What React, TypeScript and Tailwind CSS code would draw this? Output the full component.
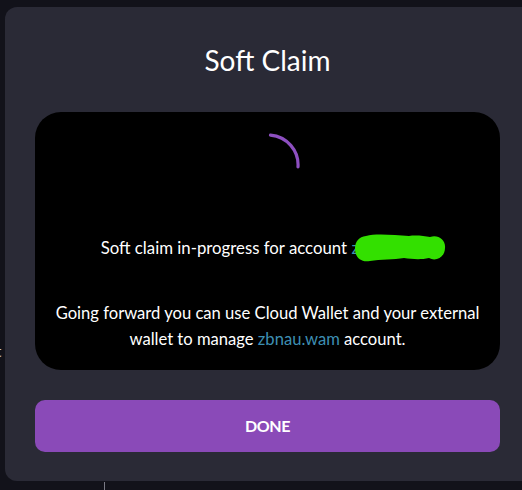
import React from "react";

function Spinner() {
  return (
    <svg width="64" height="64" viewBox="0 0 64 64" className="block">
      <path
        d="M 34.5 2.1 A 30 30 0 0 1 62 34"
        fill="none"
        stroke="#8d4fc0"
        strokeWidth="3.2"
        strokeLinecap="round"
      />
    </svg>
  );
}

function Blob() {
  return (
    <svg width="92" height="32" viewBox="0 0 92 32" className="block">
      <path
        d="M 12 4 C 22 1, 40 3, 55 4 C 62 3, 70 4, 76 5 C 84 2, 92 8, 91 16 C 91 25, 82 30, 75 26 C 66 28, 58 27, 50 26 C 40 28, 26 27, 16 29 C 6 31, 1 24, 1 17 C 1 9, 5 5, 12 4 Z"
        fill="#33e000"
      />
    </svg>
  );
}

export default function App() {
  return (
    <div
      className="relative flex w-[522px] h-[490px] items-start overflow-hidden bg-[#12121a]"
      style={{ fontFamily: "Lato, 'Noto Sans', sans-serif" }}
    >
      <span className="absolute left-[-4px] top-[340px] text-[15px] text-[#c9c9d6]">t</span>
      <div className="absolute left-[104px] top-[482px] h-[8px] w-px bg-[#7a7a85]" />
      <div className="relative ml-[5px] mt-[7px] flex h-[474px] w-[560px] shrink-0 flex-col rounded-l-[12px] bg-[#2a2a36] pl-[30px] pr-[65px] pt-[35px]">
        <h1 className="text-center text-[28px] leading-[36px] text-white">Soft Claim</h1>
        <div className="mt-[34px] flex h-[258px] flex-col items-center rounded-[26px] bg-black pt-[21px]">
          <Spinner />
          <div className="mt-[39px] whitespace-nowrap text-[16.8px] leading-[24px] text-white">
            Soft claim in-progress for account{" "}
            <span className="relative text-[#3d8fb3]">
              zbnau.wam
              <span className="absolute left-[3px] top-[-5px]">
                <Blob />
              </span>
            </span>
          </div>
          <p className="mt-[40px] whitespace-nowrap text-center text-[16.6px] leading-[26px] text-white">
            Going forward you can use Cloud Wallet and your external
            <br />
            wallet to manage <span className="text-[#3d8fb3]">zbnau.wam</span> account.
          </p>
        </div>
        <button className="mt-[30px] h-[52px] w-full rounded-[10px] bg-[#8a4ab8] text-[16px] font-bold tracking-tight text-white">
          DONE
        </button>
      </div>
    </div>
  );
}
